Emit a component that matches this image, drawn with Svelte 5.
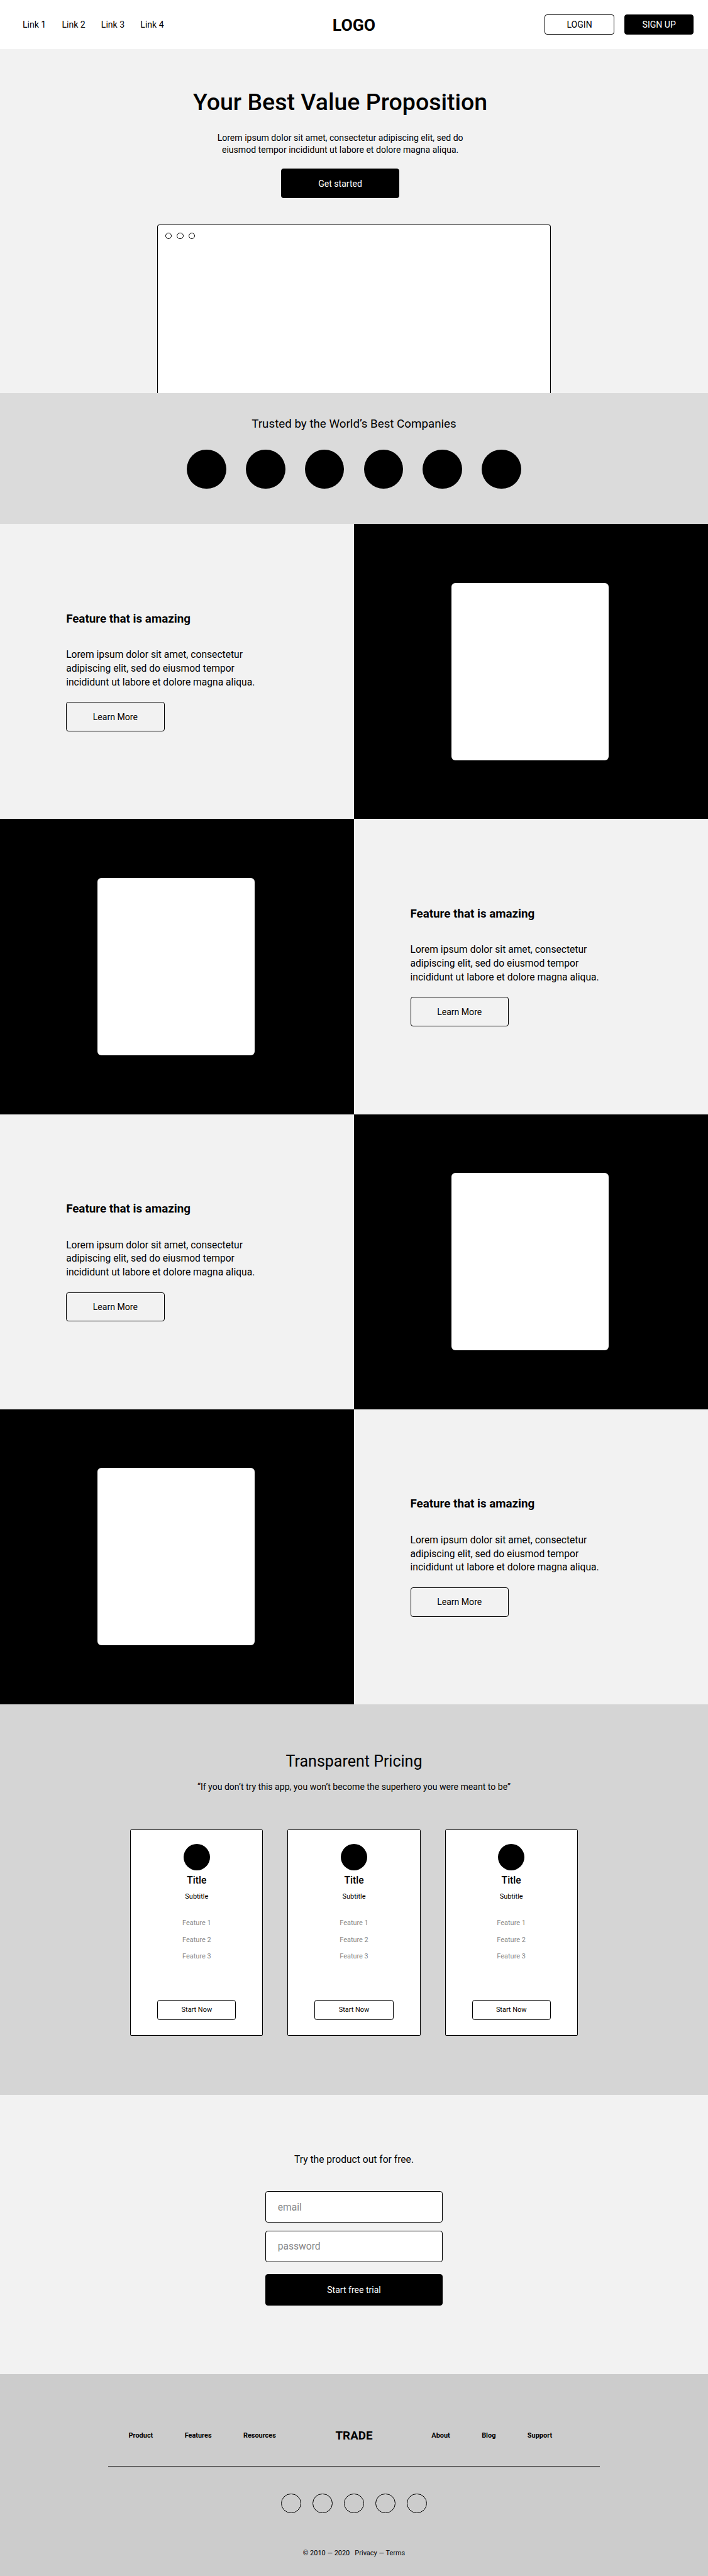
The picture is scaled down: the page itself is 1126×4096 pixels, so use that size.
<script>
  const links = ['Link 1', 'Link 2', 'Link 3', 'Link 4'];
  const companies = Array.from({ length: 6 });
  const features = [false, true, false, true];
  const plans = Array.from({ length: 3 });
  const perks = ['Feature 1', 'Feature 2', 'Feature 3'];
  const footerLeft = ['Product', 'Features', 'Resources'];
  const footerRight = ['About', 'Blog', 'Support'];
  const socials = Array.from({ length: 5 });
</script>

<div class="page">
  <header class="header">
    <nav class="links">
      {#each links as link}<a href="#top">{link}</a>{/each}
    </nav>
    <div class="logo">LOGO</div>
    <div class="actions">
      <button class="btn small">LOGIN</button>
      <button class="btn small solid">SIGN UP</button>
    </div>
  </header>

  <section class="hero">
    <div class="pitch">
      <h1>Your Best Value Proposition</h1>
      <p>
        Lorem ipsum dolor sit amet, consectetur adipiscing elit, sed do<br />
        eiusmod tempor incididunt ut labore et dolore magna aliqua.
      </p>
      <button class="btn cta solid">Get started</button>
    </div>
    <div class="window"><i></i><i></i><i></i></div>
  </section>

  <section class="trusted">
    <h2>Trusted by the World’s Best Companies</h2>
    <div class="companies">
      {#each companies as _}<span></span>{/each}
    </div>
  </section>

  {#each features as flipped}
    <section class="feature" class:flipped>
      <div class="copy">
        <h3>Feature that is amazing</h3>
        <p>
          Lorem ipsum dolor sit amet, consectetur<br />
          adipiscing elit, sed do eiusmod tempor<br />
          incididunt ut labore et dolore magna aliqua.
        </p>
        <button class="btn learn">Learn More</button>
      </div>
      <div class="media"><div class="picture"></div></div>
    </section>
  {/each}

  <section class="pricing">
    <h2>Transparent Pricing</h2>
    <p class="quote">“If you don’t try this app, you won’t become the superhero you were meant to be”</p>
    <div class="plans">
      {#each plans as _}
        <article class="plan">
          <span class="badge"></span>
          <h4>Title</h4>
          <p class="subtitle">Subtitle</p>
          <ul>
            {#each perks as perk}<li>{perk}</li>{/each}
          </ul>
          <button class="btn start">Start Now</button>
        </article>
      {/each}
    </div>
  </section>

  <section class="trial">
    <p>Try the product out for free.</p>
    <input type="email" placeholder="email" aria-label="email" />
    <input type="password" placeholder="password" aria-label="password" />
    <button class="btn submit solid">Start free trial</button>
  </section>

  <footer class="footer">
    <div class="footer-nav">
      <nav class="group">
        {#each footerLeft as item}<a href="#top">{item}</a>{/each}
      </nav>
      <div class="brand">TRADE</div>
      <nav class="group right">
        {#each footerRight as item}<a href="#top">{item}</a>{/each}
      </nav>
    </div>
    <div class="rule"></div>
    <div class="socials">
      {#each socials as _}<span></span>{/each}
    </div>
    <p class="legal">© 2010 — 2020&nbsp;&nbsp; Privacy — Terms</p>
  </footer>
</div>

<style>
  /* 1rem stands for ten units of the 1440-unit wide layout */
  :global(html) {
    font-size: 7.818px;
  }
  :global(body) {
    margin: 0;
    background: #ccc;
  }
  .page {
    font-family: Roboto, 'Liberation Sans', sans-serif;
    font-size: 1.8rem;
    color: #000;
    overflow: hidden;
  }
  .page :is(h1, h2, h3, h4, p, ul) {
    margin: 0;
    padding: 0;
    font-weight: 400;
  }
  a {
    color: inherit;
    text-decoration: none;
  }
  button,
  input,
  span,
  i,
  div,
  section,
  article,
  header,
  footer {
    box-sizing: border-box;
  }

  .btn {
    display: flex;
    align-items: center;
    justify-content: center;
    padding: 0;
    border: 1px solid #000;
    border-radius: 0.5rem;
    background: transparent;
    color: #000;
    font: 400 1.8rem/1 Roboto, 'Liberation Sans', sans-serif;
  }
  .page .btn.solid {
    background: #000;
    color: #fff;
  }
  .btn.small {
    width: 14.1rem;
    height: 4rem;
  }

  .header {
    display: grid;
    grid-template-columns: 1fr auto 1fr;
    align-items: center;
    height: 10rem;
    padding: 0 2.9rem 0 4.6rem;
    background: #fff;
  }
  .links {
    display: flex;
    gap: 3.22rem;
  }
  .page .logo {
    padding-right: 1.7rem;
    font-size: 3.4rem;
    font-weight: 700;
  }
  .actions {
    display: flex;
    justify-content: flex-end;
    gap: 2.1rem;
  }

  .hero {
    display: flex;
    flex-direction: column;
    align-items: center;
    height: 70rem;
    padding-top: 7.74rem;
    background: #f2f2f2;
  }
  .pitch {
    display: flex;
    flex-direction: column;
    align-items: center;
    padding-right: 5.6rem;
    text-align: center;
  }
  .page .pitch h1 {
    margin-bottom: 3.07rem;
    font-size: 4.8rem;
    font-weight: 500;
    line-height: 6rem;
  }
  .page .pitch p {
    margin-bottom: 2.49rem;
    line-height: 2.5rem;
  }
  .btn.cta {
    width: 24rem;
    height: 6rem;
  }
  .window {
    display: flex;
    flex: 1;
    gap: 1.1rem;
    width: 80rem;
    margin-top: 5.4rem;
    padding: 1.45rem;
    border: 1px solid #000;
    border-bottom: 0;
    border-radius: 0.5rem 0.5rem 0 0;
    background: #fff;
  }
  .window i {
    width: 1.3rem;
    height: 1.3rem;
    border: 1px solid #000;
    border-radius: 50%;
  }

  .trusted {
    height: 26.6rem;
    padding-top: 4.77rem;
    background: #dbdbdb;
    text-align: center;
  }
  .page .trusted h2 {
    margin-bottom: 3.63rem;
    font-size: 2.4rem;
    line-height: 3rem;
  }
  .companies {
    display: flex;
    justify-content: center;
    gap: 4rem;
  }
  .companies span {
    width: 8rem;
    height: 8rem;
    border-radius: 50%;
    background: #000;
  }

  .feature {
    display: grid;
    grid-template-columns: 1fr 1fr;
    height: 60rem;
    background: #f2f2f2;
  }
  .copy {
    padding: 17.95rem 0 0 13.45rem;
  }
  .page .copy h3 {
    margin-bottom: 4.45rem;
    font-size: 2.4rem;
    font-weight: 700;
    line-height: 2.8rem;
  }
  .page .copy p {
    margin-bottom: 2.6rem;
    font-size: 2rem;
    line-height: 2.8rem;
  }
  .btn.learn {
    width: 20rem;
    height: 6rem;
  }
  .media {
    display: flex;
    align-items: center;
    padding-left: 19.8rem;
    background: #000;
  }
  .picture {
    width: 32rem;
    height: 36rem;
    border-radius: 0.8rem;
    background: #fff;
  }
  .flipped .copy {
    order: 2;
    padding-left: 11.45rem;
  }

  .pricing {
    height: 79.5rem;
    padding-top: 9.58rem;
    background: #d5d5d5;
    text-align: center;
  }
  .page .pricing h2 {
    margin-bottom: 2rem;
    font-size: 3.2rem;
    line-height: 4rem;
  }
  .quote {
    line-height: 2.6rem;
  }
  .plans {
    display: flex;
    justify-content: center;
    gap: 5rem;
    margin-top: 7.32rem;
  }
  .plan {
    display: flex;
    flex-direction: column;
    align-items: center;
    width: 27rem;
    height: 42rem;
    padding-top: 2.8rem;
    border: 1px solid #000;
    border-radius: 0.2rem;
    background: #fff;
  }
  .badge {
    width: 5.4rem;
    height: 5.4rem;
    border-radius: 50%;
    background: #000;
  }
  .page .plan h4 {
    margin-top: 0.93rem;
    font-size: 2rem;
    font-weight: 500;
    line-height: 2.4rem;
  }
  .page .plan .subtitle {
    margin-top: 1.11rem;
    font-size: 1.4rem;
    line-height: 1.8rem;
  }
  .page .plan ul {
    margin: 2.85rem 0 7.09rem;
    color: #888;
    font-size: 1.4rem;
    line-height: 3.4rem;
    list-style: none;
  }
  .btn.start {
    width: 16rem;
    height: 4rem;
    padding-top: 0.15rem;
    font-size: 1.4rem;
  }

  .trial {
    display: flex;
    flex-direction: column;
    align-items: center;
    height: 56.8rem;
    padding-top: 12.06rem;
    background: #f2f2f2;
  }
  .page .trial p {
    margin-bottom: 5.14rem;
    font-size: 2rem;
    line-height: 2.4rem;
  }
  .trial input {
    width: 36rem;
    height: 6.4rem;
    margin: 0 0 1.6rem;
    padding: 0 2.35rem;
    border: 1px solid #000;
    border-radius: 0.5rem;
    background: #fff;
    font: 400 2rem Roboto, 'Liberation Sans', sans-serif;
  }
  .trial input::placeholder {
    color: #888;
    opacity: 1;
  }
  .btn.submit {
    width: 36rem;
    height: 6.4rem;
    margin-top: 0.8rem;
  }

  .footer {
    display: flex;
    flex-direction: column;
    align-items: center;
    height: 41rem;
    padding-top: 11.03rem;
    background: #ccc;
  }
  .footer-nav {
    display: grid;
    grid-template-columns: 1fr auto 1fr;
    align-items: center;
    width: 100rem;
    height: 3rem;
  }
  .group {
    display: flex;
    gap: 6.44rem;
    padding: 0 0 0.22rem 4.15rem;
    font-size: 1.4rem;
    font-weight: 700;
  }
  .group.right {
    padding-left: 12rem;
  }
  .brand {
    font-size: 2.4rem;
    font-weight: 700;
  }
  .rule {
    width: 100rem;
    height: 0.2rem;
    margin: 4.67rem 0 5.4rem;
    background: #666;
  }
  .socials {
    display: flex;
    gap: 2.4rem;
  }
  .socials span {
    width: 4rem;
    height: 4rem;
    border: 1px solid #000;
    border-radius: 50%;
  }
  .page .legal {
    margin-top: 7.12rem;
    font-size: 1.4rem;
    line-height: 2rem;
  }
</style>
